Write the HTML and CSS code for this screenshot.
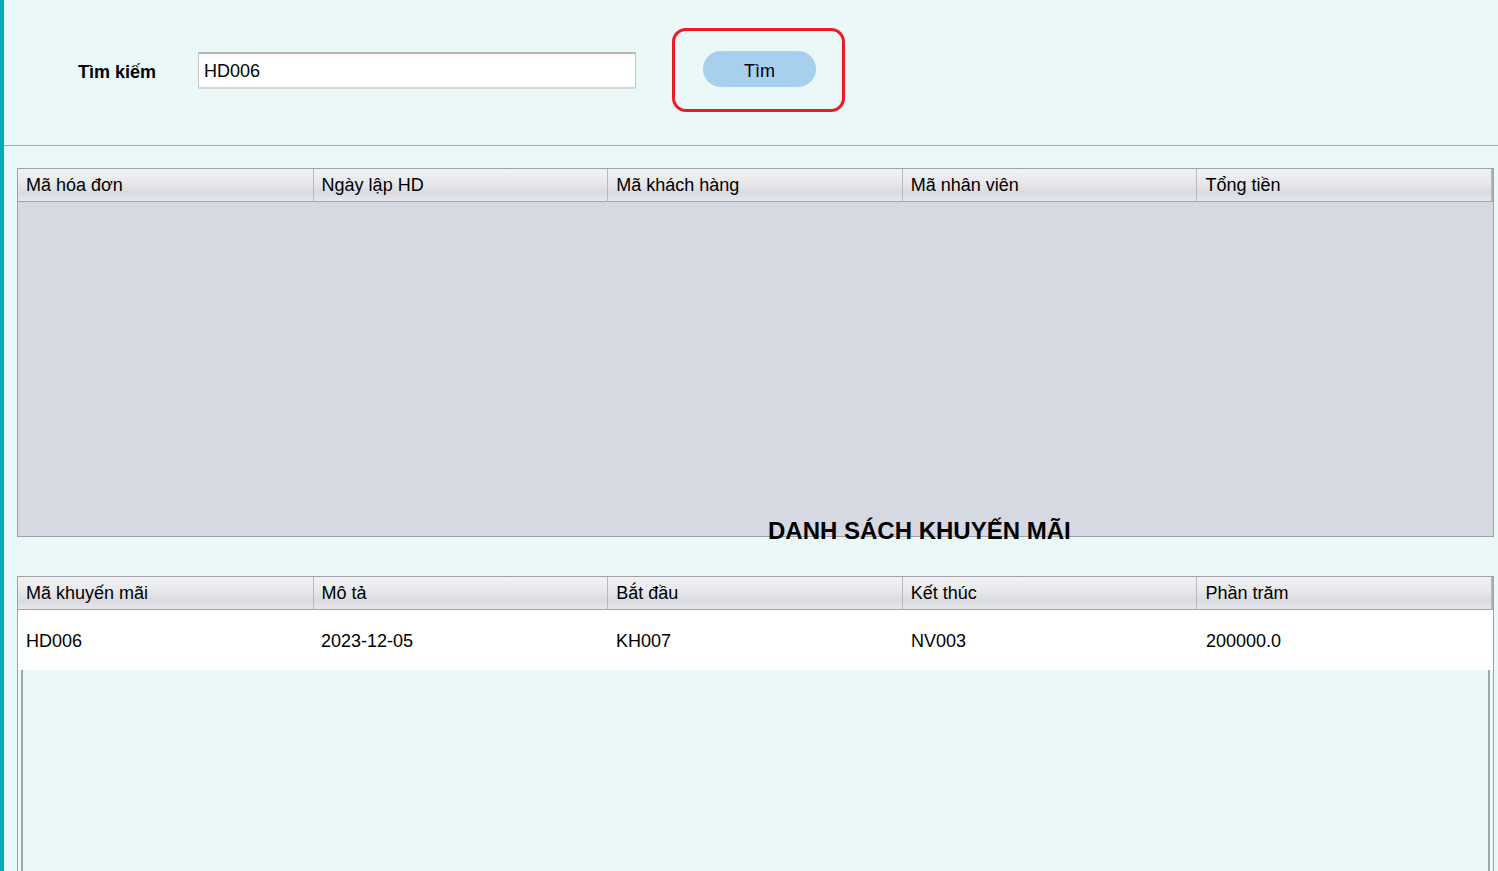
FILE: index.html
```html
<!DOCTYPE html>
<html lang="vi">
<head>
<meta charset="utf-8">
<title>Tìm kiếm hóa đơn</title>
<link rel="stylesheet" href="styles.css">
</head>
<body>
<div class="app">
  <div class="sidebar"></div>
  <div class="main">
    <div class="search-bar">
      <label class="search-label" for="q">Tìm kiếm</label>
      <input id="q" class="search-input" type="text" value="HD006">
      <div class="highlight">
        <button class="btn" type="button">Tìm</button>
      </div>
    </div>
    <div class="content">
      <div class="table table-invoices">
        <div class="thead">
          <div class="th">Mã hóa đơn</div>
          <div class="th">Ngày lập HD</div>
          <div class="th">Mã khách hàng</div>
          <div class="th">Mã nhân viên</div>
          <div class="th">Tổng tiền</div>
        </div>
        <div class="tbody tbody-empty"></div>
      </div>
      <h2 class="title">DANH SÁCH KHUYẾN MÃI</h2>
      <div class="table table-promos">
        <div class="thead">
          <div class="th">Mã khuyến mãi</div>
          <div class="th">Mô tả</div>
          <div class="th">Bắt đầu</div>
          <div class="th">Kết thúc</div>
          <div class="th">Phần trăm</div>
        </div>
        <div class="tr">
          <div class="td">HD006</div>
          <div class="td">2023-12-05</div>
          <div class="td">KH007</div>
          <div class="td">NV003</div>
          <div class="td">200000.0</div>
        </div>
        <div class="filler"></div>
      </div>
    </div>
  </div>
</div>
</body>
</html>
```

FILE: styles.css
```css
html, body {
  margin: 0;
  padding: 0;
  height: 100%;
  overflow: hidden;
}
body {
  background: #eaf8f8;
  font-family: "Liberation Sans", Arial, sans-serif;
  color: #000;
}
.app {
  display: flex;
  height: 100%;
}
.sidebar {
  width: 4px;
  flex: none;
  background: #00adb5;
}
.main {
  flex: 1;
  display: flex;
  flex-direction: column;
  min-width: 0;
}
.search-bar {
  flex: none;
  height: 146px;
  box-sizing: border-box;
  padding: 0 0 5px 74px;
  display: flex;
  align-items: center;
  border-bottom: 1px solid #a9acae;
}
.search-label {
  width: 120px;
  flex: none;
  margin-top: 4px;
  font-size: 18px;
  font-weight: bold;
}
.search-input {
  width: 438px;
  height: 37px;
  box-sizing: border-box;
  margin: 0;
  padding: 3px 0 0 5px;
  border-style: solid;
  border-width: 2px 1px 2px 1px;
  border-color: #b8b8b8 #c4c4c4 #d8d8d8 #c4c4c4;
  background: linear-gradient(#f6f6f6 0, #fff 4px);
  font-family: "Liberation Sans", Arial, sans-serif;
  font-size: 18px;
  color: #000;
  outline: none;
}
.highlight {
  margin-left: 36px;
  width: 173px;
  height: 84px;
  box-sizing: border-box;
  border: 3px solid #ec1c24;
  border-radius: 14px;
  display: flex;
  align-items: center;
  justify-content: center;
}
.btn {
  width: 113px;
  height: 36px;
  margin: 0 0 2px 2px;
  border: none;
  border-radius: 18px;
  background: #a7cfee;
  font-family: "Liberation Sans", Arial, sans-serif;
  font-size: 18px;
  color: #000;
  padding: 4px 0 0 0;
}
.content {
  flex: 1;
  padding: 22px 4px 0 13px;
  display: flex;
  flex-direction: column;
}
.table {
  flex: none;
  border: 1px solid #9ea1a9;
  display: flex;
  flex-direction: column;
}
.thead {
  flex: none;
  display: grid;
  grid-template-columns: repeat(5, 1fr);
  height: 33px;
  box-sizing: border-box;
  border-bottom: 1px solid #a3a5ab;
  border-right: 2px solid #b0b2b8;
  background: linear-gradient(#f1f1f3 0%, #e8e9ec 40%, #dadbe0 75%, #e6e8ee 100%);
}
.th {
  padding-left: 8px;
  font-size: 18px;
  line-height: 33px;
  border-left: 1px solid #b6b8be;
  white-space: nowrap;
}
.th:first-child {
  border-left: none;
}
.table-invoices {
  height: 369px;
  box-sizing: border-box;
}
.tbody-empty {
  flex: 1;
  background: #d6d9e1;
}
.title {
  flex: none;
  margin: -20px 0 31px 751px;
  font-size: 24px;
  line-height: 28px;
  font-weight: bold;
  font-family: "Liberation Sans", Arial, sans-serif;
}
.table-promos {
  height: 320px;
  border-bottom: none;
}
.tr {
  flex: none;
  display: grid;
  grid-template-columns: repeat(5, 1fr);
  height: 60px;
  background: #fff;
}
.td {
  padding-left: 8px;
  font-size: 18px;
  line-height: 62px;
}
.filler {
  flex: 1;
  margin: 0 3px;
  border-left: 2px solid #a3a6ae;
  border-right: 2px solid #a3a6ae;
  background: #eaf8f8;
}
```
